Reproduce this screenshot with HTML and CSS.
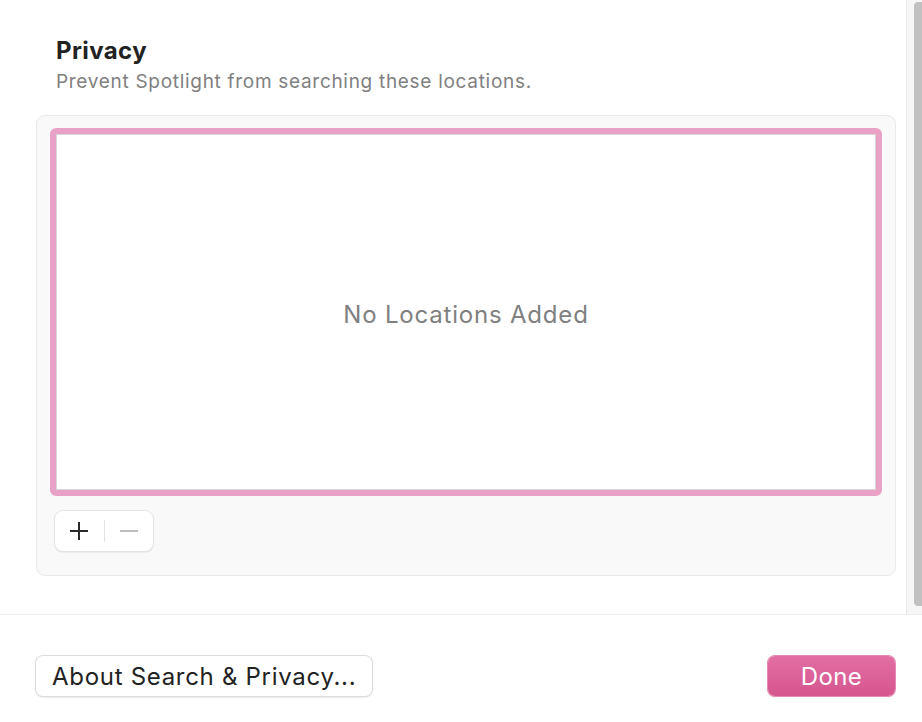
FILE: index.html
```html
<!DOCTYPE html>
<html lang="en">
<head>
  <meta charset="UTF-8">
  <meta name="viewport" content="width=device-width, initial-scale=1.0">
  <title>Search &amp; Privacy</title>
  <link rel="stylesheet" href="styles.css">
</head>
<body>
  <div class="window">
    <div class="scroll-area">
      <div class="content">
        <h2 class="title">Privacy</h2>
        <p class="subtitle">Prevent Spotlight from searching these locations.</p>
        <div class="panel">
          <div class="list-box">
            <span class="empty">No Locations Added</span>
          </div>
          <div class="segmented">
            <button class="seg-btn" aria-label="Add">
              <svg width="22" height="22" viewBox="0 0 22 22"><path d="M11 2v18M2 11h18" stroke="#2a2a2a" stroke-width="2" fill="none"/></svg>
            </button>
            <span class="seg-divider"></span>
            <button class="seg-btn" aria-label="Remove">
              <svg width="22" height="22" viewBox="0 0 22 22"><path d="M2 11h18" stroke="#bdbdbd" stroke-width="2" fill="none"/></svg>
            </button>
          </div>
        </div>
      </div>
      <div class="scrollbar">
        <div class="thumb"></div>
      </div>
    </div>
    <div class="footer">
      <button class="btn">About Search &amp; Privacy...</button>
      <button class="btn btn-primary">Done</button>
    </div>
  </div>
</body>
</html>
```

FILE: styles.css
```css
body {
  margin: 0;
  padding: 0;
  background-color: #ffffff;
  font-family: "Inter", "Noto Sans", sans-serif;
  color: #222222;
}

.window {
  width: 922px;
  height: 722px;
  display: flex;
  flex-direction: column;
  overflow: hidden;
}

.scroll-area {
  height: 614px;
  display: flex;
}

.content {
  flex: 1;
  padding: 36px 10px 0 36px;
}

.title {
  margin: 0 0 0 20px;
  font-size: 24px;
  font-weight: 700;
  letter-spacing: 0.4px;
  line-height: 30px;
  color: #222222;
}

.subtitle {
  margin: 4px 0 0 20px;
  font-size: 19px;
  letter-spacing: 0.7px;
  line-height: 24px;
  color: #808080;
}

.panel {
  margin-top: 21px;
  height: 447px;
  border: 1px solid #e9e9e9;
  border-radius: 9px;
  background-color: #f9f9f9;
  padding: 12px 13px 0 13px;
}

.list-box {
  height: 356px;
  box-sizing: content-box;
  border: 6px solid #e9a2c6;
  border-radius: 6px;
  background-color: #ffffff;
  box-shadow: inset 0 0 0 1px #d6d6d6;
  display: flex;
  align-items: center;
  justify-content: center;
}

.empty {
  margin-top: 4px;
  font-size: 24px;
  letter-spacing: 0.8px;
  color: #808080;
}

.segmented {
  margin-top: 15px;
  margin-left: 5px;
  width: 98px;
  height: 40px;
  display: flex;
  align-items: center;
  background-color: #ffffff;
  border-radius: 8px;
  box-shadow: 0 0 0 1px #e4e4e4, 0 1px 2px rgba(0, 0, 0, 0.18);
}

.seg-btn {
  flex: 1;
  height: 40px;
  border: none;
  background: none;
  padding: 0;
  display: flex;
  align-items: center;
  justify-content: center;
}

.seg-divider {
  width: 1px;
  height: 22px;
  background-color: #e2e2e2;
}

.scrollbar {
  width: 15px;
  border-left: 1px solid #e8e8e8;
  background-color: #f6f6f6;
  display: flex;
  justify-content: flex-end;
}

.thumb {
  width: 8px;
  height: 604px;
  margin-top: 2px;
  background-color: #c1c1c1;
  border-radius: 4px 0 0 4px;
}

.footer {
  flex: 1;
  border-top: 1px solid #ececec;
  display: flex;
  justify-content: space-between;
  align-items: flex-start;
  padding: 41px 27px 0 36px;
}

.btn {
  height: 40px;
  padding: 0 16px;
  font-family: "Inter", "Noto Sans", sans-serif;
  font-size: 24px;
  letter-spacing: 0.7px;
  color: #222222;
  background-color: #ffffff;
  border: none;
  border-radius: 7px;
  box-shadow: 0 0 0 1px #dddddd, 0 1px 2px rgba(0, 0, 0, 0.25);
}

.btn-primary {
  width: 127px;
  letter-spacing: 0.4px;
  color: #ffffff;
  background: linear-gradient(#e26ea4, #d6558f);
  box-shadow: 0 0 0 1px #e48ab3, 0 1px 2px rgba(0, 0, 0, 0.12);
}
```
